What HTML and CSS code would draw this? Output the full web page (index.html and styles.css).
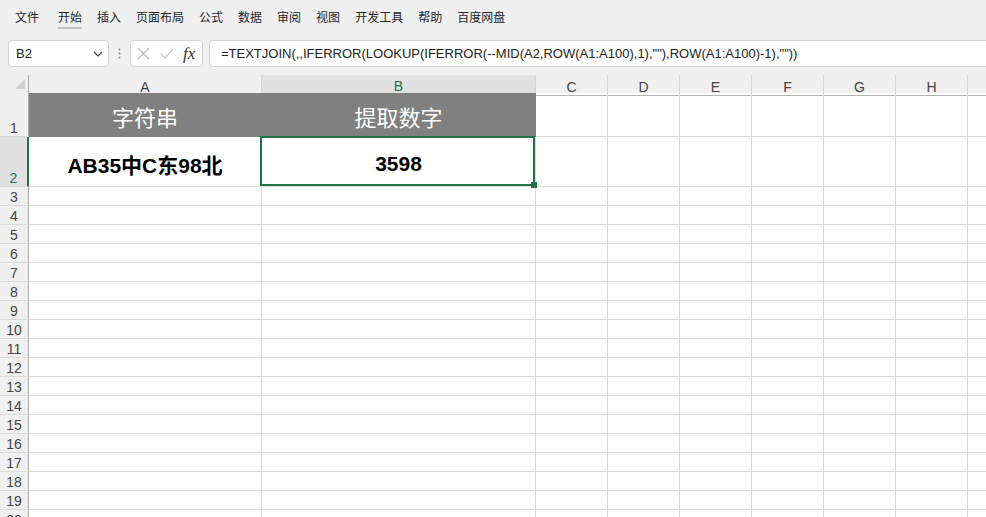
FILE: index.html
```html
<!DOCTYPE html>
<html lang="zh-CN">
<head>
  <meta charset="UTF-8">
  <title>提取数字</title>
  <link rel="stylesheet" href="styles.css">
</head>
<body>

  <div class="menu">
    <span class="tab first">文件</span>
    <span class="tab active">开始</span>
    <span class="tab">插入</span>
    <span class="tab">页面布局</span>
    <span class="tab">公式</span>
    <span class="tab">数据</span>
    <span class="tab">审阅</span>
    <span class="tab">视图</span>
    <span class="tab">开发工具</span>
    <span class="tab">帮助</span>
    <span class="tab">百度网盘</span>
  </div>

  <div class="fbar">
    <div class="namebox">
      <span>B2</span>
      <svg width="10" height="6" viewBox="0 0 10 6"><path d="M1 1 L5 5 L9 1" fill="none" stroke="#444" stroke-width="1.2"/></svg>
    </div>
    <div class="dots">
      <svg width="3" height="11" viewBox="0 0 3 11"><circle cx="1.5" cy="1.5" r="1" fill="#8a8a8a"/><circle cx="1.5" cy="5.5" r="1" fill="#8a8a8a"/><circle cx="1.5" cy="9.5" r="1" fill="#8a8a8a"/></svg>
    </div>
    <div class="fbuttons">
      <svg width="13" height="13" viewBox="0 0 13 13"><path d="M1 1 L12 12 M12 1 L1 12" stroke="#b9b9b9" stroke-width="1.1"/></svg>
      <svg width="14" height="11" viewBox="0 0 14 11"><path d="M1 5.5 L5 10 L13 1" fill="none" stroke="#b9b9b9" stroke-width="1.1"/></svg>
      <span class="fx">fx</span>
    </div>
    <div class="formula">=TEXTJOIN(,,IFERROR(LOOKUP(IFERROR(--MID(A2,ROW(A1:A100),1),""),ROW(A1:A100)-1),""))</div>
  </div>

  <div class="sheet">
    <div class="row head">
      <div class="corner"><svg width="28" height="17" viewBox="0 0 28 17"><polygon points="25,4 25,14 15,14" fill="#d0d0d0"/></svg></div>
      <div class="col">A</div>
      <div class="col sel">B</div>
      <div class="col">C</div>
      <div class="col">D</div>
      <div class="col">E</div>
      <div class="col">F</div>
      <div class="col">G</div>
      <div class="col">H</div>
      <div class="col"></div>
    </div>

    <div class="row r1">
      <div class="num">1</div>
      <div class="title">字符串</div>
      <div class="title">提取数字</div>
      <div></div><div></div><div></div><div></div><div></div><div></div><div></div>
    </div>

    <div class="row r2">
      <div class="num sel">2</div>
      <div class="val">AB35中C东98北</div>
      <div class="val active">3598<span class="handle"></span></div>
      <div></div><div></div><div></div><div></div><div></div><div></div><div></div>
    </div>

    <div class="row"><div class="num">3</div><div></div><div></div><div></div><div></div><div></div><div></div><div></div><div></div><div></div></div>
    <div class="row"><div class="num">4</div><div></div><div></div><div></div><div></div><div></div><div></div><div></div><div></div><div></div></div>
    <div class="row"><div class="num">5</div><div></div><div></div><div></div><div></div><div></div><div></div><div></div><div></div><div></div></div>
    <div class="row"><div class="num">6</div><div></div><div></div><div></div><div></div><div></div><div></div><div></div><div></div><div></div></div>
    <div class="row"><div class="num">7</div><div></div><div></div><div></div><div></div><div></div><div></div><div></div><div></div><div></div></div>
    <div class="row"><div class="num">8</div><div></div><div></div><div></div><div></div><div></div><div></div><div></div><div></div><div></div></div>
    <div class="row"><div class="num">9</div><div></div><div></div><div></div><div></div><div></div><div></div><div></div><div></div><div></div></div>
    <div class="row"><div class="num">10</div><div></div><div></div><div></div><div></div><div></div><div></div><div></div><div></div><div></div></div>
    <div class="row"><div class="num">11</div><div></div><div></div><div></div><div></div><div></div><div></div><div></div><div></div><div></div></div>
    <div class="row"><div class="num">12</div><div></div><div></div><div></div><div></div><div></div><div></div><div></div><div></div><div></div></div>
    <div class="row"><div class="num">13</div><div></div><div></div><div></div><div></div><div></div><div></div><div></div><div></div><div></div></div>
    <div class="row"><div class="num">14</div><div></div><div></div><div></div><div></div><div></div><div></div><div></div><div></div><div></div></div>
    <div class="row"><div class="num">15</div><div></div><div></div><div></div><div></div><div></div><div></div><div></div><div></div><div></div></div>
    <div class="row"><div class="num">16</div><div></div><div></div><div></div><div></div><div></div><div></div><div></div><div></div><div></div></div>
    <div class="row"><div class="num">17</div><div></div><div></div><div></div><div></div><div></div><div></div><div></div><div></div><div></div></div>
    <div class="row"><div class="num">18</div><div></div><div></div><div></div><div></div><div></div><div></div><div></div><div></div><div></div></div>
    <div class="row"><div class="num">19</div><div></div><div></div><div></div><div></div><div></div><div></div><div></div><div></div><div></div></div>
    <div class="row"><div class="num">20</div><div></div><div></div><div></div><div></div><div></div><div></div><div></div><div></div><div></div></div>
  </div>

</body>
</html>
```

FILE: styles.css
```css
body {
  margin: 0;
  width: 986px;
  height: 517px;
  overflow: hidden;
  background-color: #f0f0f0;
  font-family: "Liberation Sans", "Noto Sans CJK SC", sans-serif;
}

.menu {
  height: 40px;
  display: flex;
  align-items: flex-start;
  padding-left: 15px;
  box-sizing: border-box;
  font-family: "Noto Sans CJK SC", sans-serif;
  font-size: 12px;
  color: #262626;
}

.menu .tab {
  padding-top: 8px;
  line-height: 17px;
  padding-bottom: 2px;
  border-bottom: 2px solid transparent;
  margin-right: 15px;
}

.menu .tab.first {
  margin-right: 19px;
}

.menu .tab.active {
  border-bottom-color: #c4c4c4;
}

.fbar {
  height: 27px;
  display: flex;
  margin-bottom: 8px;
}

.namebox {
  margin-left: 8px;
  width: 101px;
  box-sizing: border-box;
  background: #fff;
  border: 1px solid #d4d4d4;
  border-radius: 4px;
  display: flex;
  align-items: center;
  justify-content: space-between;
  padding: 0 5px 0 7px;
  font-size: 13px;
  color: #222;
}

.dots {
  width: 21px;
  display: flex;
  align-items: center;
  justify-content: center;
}

.fbuttons {
  width: 73px;
  box-sizing: border-box;
  background: #fff;
  border: 1px solid #d4d4d4;
  border-radius: 4px;
  display: flex;
  align-items: center;
  padding-left: 6px;
}

.fbuttons svg {
  margin-right: 10px;
}

.fbuttons .fx {
  font-family: "Liberation Serif", serif;
  font-style: italic;
  font-size: 17px;
  color: #333;
  margin-left: -1px;
}

.formula {
  flex: 1;
  margin-left: 6px;
  margin-right: -10px;
  background: #fff;
  border: 1px solid #d4d4d4;
  border-radius: 4px;
  padding-left: 11px;
  font-size: 13px;
  line-height: 25px;
  color: #222;
  white-space: nowrap;
}

.sheet {
  background: #fff;
  width: 1040px;
}

.row {
  display: grid;
  grid-template-columns: 29px 233px 274px repeat(7, 72px);
  height: 19px;
}

.row > div {
  box-sizing: border-box;
  border-right: 1px solid #dadada;
  border-bottom: 1px solid #dadada;
}

.row > .num {
  background: #f0f0f0;
  border-right: 1px solid #ababab;
  display: flex;
  align-items: flex-end;
  justify-content: center;
  font-size: 14px;
  line-height: 16px;
  color: #444;
}

.row > .num.sel {
  background: #e1e1e1;
  border-right: 2px solid #217346;
  color: #217346;
}

.row.head {
  height: 18px;
  background: #f0f0f0;
}

.row.head > div {
  border-bottom: 1px solid #b4b4b4;
  border-right: 1px solid #d6d6d6;
  display: flex;
  align-items: flex-end;
  justify-content: center;
  font-size: 14px;
  line-height: 15px;
  color: #444;
}

.row.head > .corner {
  border-right: 1px solid #ababab;
  display: block;
}

.row.head > .col.sel {
  background: #e1e1e1;
  border-bottom: 2px solid #217346;
  color: #217346;
}

.row.r1 {
  height: 44px;
}

.row.r1 .title {
  background: #808080;
  border-color: #808080;
  color: #fff;
  font-family: "Noto Sans CJK SC", sans-serif;
  font-size: 22px;
  display: flex;
  align-items: center;
  justify-content: center;
  padding-top: 3px;
}

.row.r2 {
  height: 50px;
}

.row.r2 .val {
  display: flex;
  align-items: center;
  justify-content: center;
  padding-top: 5px;
  font-size: 21px;
  font-weight: bold;
  color: #000;
}

.row.r2 .val.active {
  position: relative;
}

.row.r2 .val.active::after {
  content: "";
  position: absolute;
  top: -1px;
  left: -2px;
  right: 0;
  bottom: 0;
  border: 2px solid #217346;
  z-index: 2;
}

.handle {
  position: absolute;
  right: -2px;
  bottom: -2px;
  width: 6px;
  height: 6px;
  background: #217346;
  z-index: 3;
}
```
